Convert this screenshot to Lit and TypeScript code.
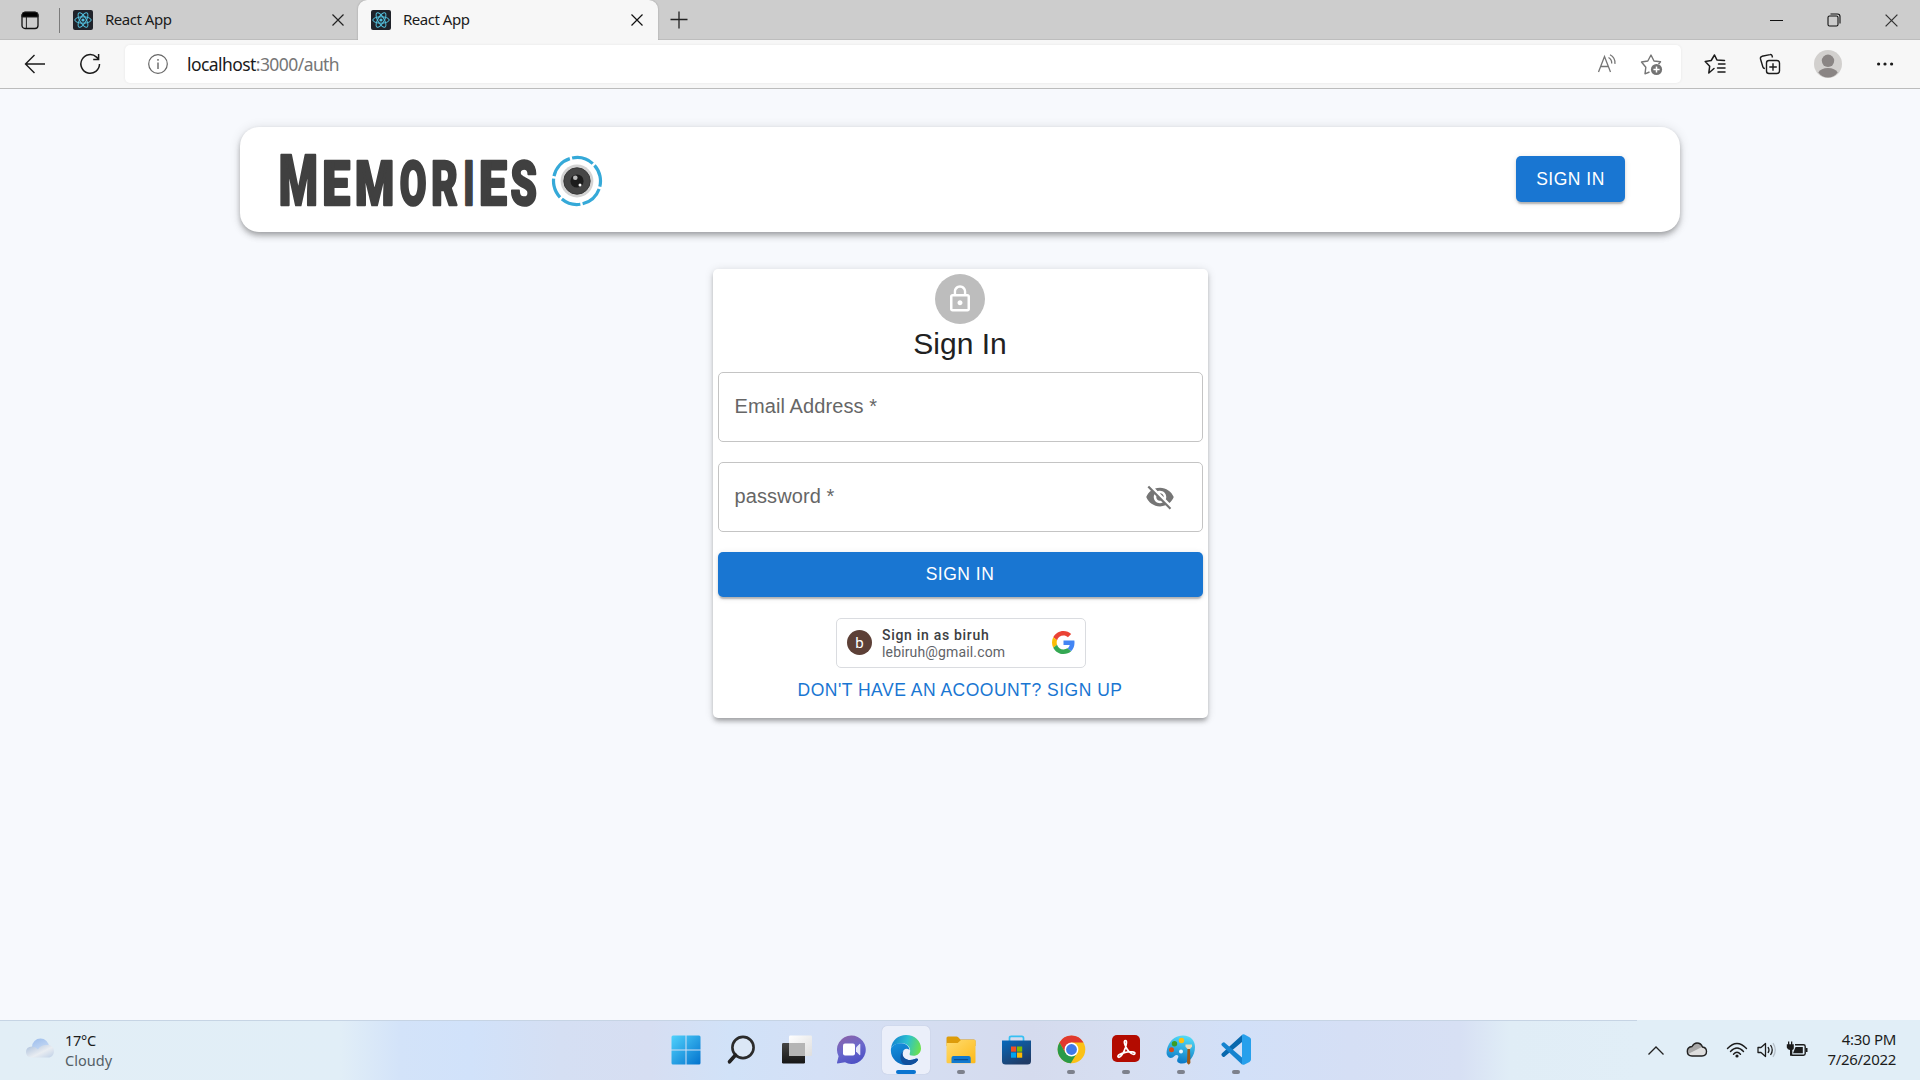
import { LitElement, html, css, svg, type TemplateResult } from "lit";
import { customElement } from "lit/decorators.js";

const reactIcon = () => html`<svg class="ico" width="20" height="20" viewBox="0 0 20 20">
  <rect width="20" height="20" rx="2" fill="#20232a" />
  <g fill="none" stroke="#53c1de" stroke-width="1">
    <ellipse cx="10" cy="10" rx="8.2" ry="3.2" />
    <ellipse cx="10" cy="10" rx="8.2" ry="3.2" transform="rotate(60 10 10)" />
    <ellipse cx="10" cy="10" rx="8.2" ry="3.2" transform="rotate(120 10 10)" />
  </g>
  <circle cx="10" cy="10" r="1.6" fill="#53c1de" />
</svg>`;

const closeIcon = (size: number, color: string) => html`<svg class="ico" width=${size} height=${size} viewBox="0 0 14 14">
  <path d="M1.5 1.5 12.5 12.5M12.5 1.5 1.5 12.5" stroke=${color} stroke-width="1.2" fill="none" />
</svg>`;

/** Browser chrome: tab strip and address bar. */
@customElement("browser-bar")
export class BrowserBar extends LitElement {
  static styles = css`
    :host { display: block; font-family: "Noto Sans", "Open Sans", sans-serif; color: #1b1b1b; }
    .ico { display: block; flex: none; }
    .tabs { display: flex; height: 40px; background: #cdcdcd; box-sizing: border-box; box-shadow: inset 0 -1px 0 #bdbdbd; }
    .lead { width: 59px; display: flex; align-items: center; padding-left: 21px; box-sizing: border-box; }
    .tab { display: flex; align-items: center; box-sizing: border-box; height: 40px; font-size: 15px; letter-spacing: -0.48px; }
    .tab .title { flex: 1; padding-left: 12px; line-height: 38px; height: 40px; }
    .first { width: 299px; padding: 0 13px 0 0; }
    .first::before { content: ""; width: 1px; height: 25px; background: #7b7b7b; margin: 1px 0 0; }
    .first .react { margin-left: 13px; }
    .react { flex: none; }
    .active { width: 300px; padding: 0 14px 0 13px; background: #f7f7f7; border-radius: 9px 9px 0 0; box-shadow: 0 0 2px rgba(0, 0, 0, 0.25); clip-path: inset(0 -3px 0 -3px); }
    .plus { margin: 11px 0 0 12px; }
    .win { margin-left: auto; display: flex; align-items: center; padding-right: 21px; gap: 43px; }
    .tools { height: 49px; background: #f7f7f7; border-bottom: 1px solid #bcbcbc; box-sizing: border-box; display: flex; align-items: center; }
    .back { margin-left: 24px; }
    .reload { margin-left: 33px; }
    .addr { width: 1556px; height: 38px; margin: 0 0 1px 24px; background: #fff; border-radius: 5px; box-shadow: 0 0 3px rgba(0, 0, 0, 0.07); display: flex; align-items: center; padding: 0 17px 0 22px; box-sizing: border-box; }
    .url { flex: 1; padding-left: 18px; font-size: 17.5px; letter-spacing: -0.57px; line-height: 36px; }
    .url span { color: #767676; }
    .star { margin-left: 21px; }
    .fav { margin-left: 23px; }
    .col { margin-left: 33px; }
    .user { margin-left: 33px; }
    .dots { margin-left: 34px; }
  `;

  render() {
    return html`
      <div class="tabs">
        <div class="lead">
          <svg class="ico" width="18" height="19" viewBox="0 0 18 19">
            <rect x="1" y="1.5" width="16" height="16" rx="3" fill="none" stroke="#111" stroke-width="1.3" />
            <path d="M1 6V4a3 3 0 0 1 3-3h10a3 3 0 0 1 3 3v2zM5.4 6v11" fill="#000" stroke="#222" stroke-width="1" />
          </svg>
        </div>
        <div class="tab first">
          <div class="react">${reactIcon()}</div><div class="title">React App</div>${closeIcon(14, "#222")}
        </div>
        <div class="tab active">
          <div class="react">${reactIcon()}</div><div class="title">React App</div>${closeIcon(14, "#111")}
        </div>
        <svg class="ico plus" width="18" height="18" viewBox="0 0 18 18"><path d="M9 .5v17M.5 8.500h17" stroke="#222" stroke-width="1.3" /></svg>
        <div class="win">
          <svg class="ico" width="15" height="14" viewBox="0 0 15 14"><path d="M1 7.500h13" stroke="#111" /></svg>
          <svg class="ico" width="14" height="14" viewBox="0 0 14 14" fill="none" stroke="#111" stroke-width="1.1">
            <rect x="1" y="3" width="10" height="10" rx="1.500" /><path d="M3.500 1h7Q13 1 13 3.500v7" />
          </svg>
          ${closeIcon(15, "#333")}
        </div>
      </div>
      <div class="tools">
        <svg class="ico back" width="22" height="22" viewBox="0 0 22 22" fill="none" stroke="#1b1b1b" stroke-width="1.4"><path d="M21 11H1.600M10.500 2l-9 9 9 9" /></svg>
        <svg class="ico reload" width="22" height="22" viewBox="0 0 22 22" fill="none" stroke="#1b1b1b" stroke-width="1.5">
          <path d="M20.500 11a9.300 9.300 0 1 1-3-6.900L19.500 6M19.600 1v5.400h-5.400" />
        </svg>
        <div class="addr">
          <svg class="ico" width="22" height="22" viewBox="0 0 22 22" fill="none" stroke="#666" stroke-width="1.2">
            <circle cx="11" cy="11" r="9.300" /><path d="M11 9.500v6.500M11 6v1.800" stroke-width="1.400" />
          </svg>
          <div class="url">localhost<span>:3000/auth</span></div>
          <svg class="ico" width="22" height="22" viewBox="0 0 22 22" fill="none" stroke="#757575" stroke-width="1.3">
            <path d="M1.500 19 7.500 3.500 13.500 19M3.800 13.500h7.500M11.500 4.500q3.500 2 3.200 6M13 1.800q5.600 3 4.900 9" />
          </svg>
          <svg class="ico star" width="24" height="24" viewBox="0 0 24 24">
            <path d="M9.500 20 5 21.800l.8-6.500L1.500 10l6.300-1L11 3l3 6 6.500.8-2 2.400" fill="none" stroke="#757575" stroke-width="1.400" stroke-linejoin="round" />
            <circle cx="16.500" cy="17.500" r="5.600" fill="#737373" /><path d="M16.500 14.400v6.200M13.400 17.500h6.200" stroke="#fff" stroke-width="1.500" />
          </svg>
        </div>
        <svg class="ico fav" width="22" height="22" viewBox="0 0 22 22" fill="none" stroke="#1b1b1b" stroke-width="1.500" stroke-linejoin="round" stroke-linecap="round">
          <path d="M10 15.500 4.800 20l.9-6.800L1.200 8.500l6-1L10.500 2l2.400 4.900 7.600.6M14.500 11h6.500M13.500 15h7.500M14 19h7" />
        </svg>
        <svg class="ico col" width="22" height="22" viewBox="0 0 22 22" fill="none" stroke="#1b1b1b" stroke-width="1.400">
          <rect x="7.500" y="7.500" width="13" height="13" rx="2.500" /><path d="M14 10.300v7.500M10.300 14h7.500M13.500 4.500 13 2.600Q12.500 1.200 11 1.600L3 3.300Q1 4 1.500 6l2.400 8q.4 1.500 2 1.500" />
        </svg>
        <svg class="ico user" width="28" height="28" viewBox="0 0 28 28">
          <circle cx="14" cy="14" r="14" fill="#d2d0ce" /><circle cx="14" cy="10.800" r="6.200" fill="#8a8584" />
          <path d="M4.300 22.500Q7 18 14 18t9.700 4.500Q20 27.500 14 27.500T4.300 22.500z" fill="#8a8584" />
        </svg>
        <svg class="ico dots" width="18" height="6" viewBox="0 0 18 6" fill="#1b1b1b"><circle cx="2.600" cy="3" r="1.600" /><circle cx="9" cy="3" r="1.600" /><circle cx="15.600" cy="3" r="1.600" /></svg>
      </div>
    `;
  }
}

// Each wordmark letter: glyph, ink left edge, font size, ink width.
const WORDMARK: [string, number, number, number][] = [
  ["M", 1, 70, 35],
  ["E", 44.8, 61, 24],
  ["M", 77.3, 61, 35],
  ["O", 121, 61, 24],
  ["R", 153.3, 61, 24],
  ["I", 185.6, 61, 6.6],
  ["E", 201.5, 61, 24],
  ["S", 231.5, 61, 24.5],
];

// Ink left bearing and ink width of the heavy Roboto capitals, in em.
const INK: Record<string, [number, number]> = {
  M: [0.052, 0.783],
  E: [0.052, 0.482],
  O: [0.035, 0.62],
  R: [0.052, 0.59],
  I: [0.058, 0.185],
  S: [0.026, 0.58],
};

/** The sign-in page itself. */
@customElement("auth-page")
export class AuthPage extends LitElement {
  static styles = css`
    :host { display: flex; flex-direction: column; align-items: center; background: #f7f9fd; font-family: "Liberation Sans", Arial, sans-serif; }
    .nav { width: 1440px; height: 105px; margin-top: 38px; background: #fff; border-radius: 19px; box-sizing: border-box; padding: 0 55px 0 40px; display: flex; align-items: center; justify-content: space-between;
      box-shadow: 0 2.500px 5px -1px rgba(0, 0, 0, 0.2), 0 5px 6px 0 rgba(0, 0, 0, 0.14), 0 1px 12px 0 rgba(0, 0, 0, 0.12); }
    .brand { display: flex; align-items: center; }
    .brand svg { display: block; }
    .word { font-family: Roboto, sans-serif; font-weight: 900; fill: #404040; stroke: #404040; stroke-width: 2.500px; stroke-linejoin: round; }
    .lens { margin: 3px 0 0 11px; }
    .btn { background: #1976d2; color: #fff; border: 0; border-radius: 5px; font: 500 17.5px/22px "Liberation Sans", Arial, sans-serif; letter-spacing: 0.5px; display: flex; align-items: center; justify-content: center; box-sizing: border-box; padding: 0 0 1px;
      box-shadow: 0 3.500px 1.500px -2px rgba(0, 0, 0, 0.16), 0 2px 2.500px 0 rgba(0, 0, 0, 0.12), 0 1px 6px 0 rgba(0, 0, 0, 0.1); }
    .nav .btn { width: 109px; height: 46px; margin-bottom: 2px; padding: 1px 0 0; }
    .card { width: 495px; height: 449px; margin-top: 37px; background: #fff; border-radius: 5px; box-sizing: border-box; padding: 5px; display: flex; flex-direction: column; align-items: center;
      box-shadow: 0 3.500px 4px -2px rgba(0, 0, 0, 0.2), 0 3.500px 5px 0 rgba(0, 0, 0, 0.14), 0 1px 10px 0 rgba(0, 0, 0, 0.12); }
    .avatar { width: 50px; height: 50px; border-radius: 50%; background: #bdbdbd; display: flex; align-items: center; justify-content: center; }
    h1 { margin: 0; font-size: 30px; font-weight: 400; line-height: 40px; color: #212121; }
    .field { width: 485px; height: 70px; border: 1px solid #c4c4c4; border-radius: 5px; box-sizing: border-box; display: flex; align-items: center; justify-content: space-between; padding: 0 27px 2px 16px; font-size: 20px; letter-spacing: 0.1px; color: #666; margin-top: 20px; }
    .field.email { margin-top: 8px; }
    .field svg { display: block; margin-top: 2px; }
    .card .btn { width: 485px; height: 45px; margin-top: 20px; }
    .google { width: 250px; height: 50px; margin-top: 21px; margin-left: 2px; border: 1px solid #dadce0; border-radius: 5px; box-sizing: border-box; display: flex; align-items: center; padding: 0 10px; font-family: Roboto, sans-serif; }
    .who { width: 25px; height: 25px; border-radius: 50%; background: #5d4037; color: #fff; font-size: 15px; line-height: 26px; text-align: center; margin-bottom: 1px; }
    .lines { flex: 1; padding: 1px 0 0 10px; font-size: 14px; line-height: 17px; color: #5f6368; }
    .lines b { display: block; font-weight: 500; color: #3c4043; letter-spacing: 0.7px; }
    .mail { display: block; letter-spacing: 0.15px; }
    .google svg { margin-bottom: 2px; }
    .link { margin-top: 11px; font-size: 17.5px; line-height: 22px; letter-spacing: 0.5px; color: #1976d2; white-space: nowrap; }
  `;

  render() {
    return html`
      <div class="nav">
        <div class="brand">
          <svg class="word" width="260" height="96" viewBox="0 -20 260 96">
            ${WORDMARK.map(([ch, x, size, width]) => {
              const [bearing, ink] = INK[ch];
              const sx = width / (ink * size);
              return svg`<text font-size=${size} transform="translate(${x - bearing * size * sx} 52.800) scale(${sx} 1)">${ch}</text>`;
            })}
          </svg>
          <svg class="lens" width="52" height="52" viewBox="0 0 52 52">
            <g fill="none" stroke="#35a9d8" stroke-width="3.200">
              <circle cx="26" cy="26" r="23.500" pathLength="360" stroke-dasharray="54 6 56 6 56 6 48 6 50 6 60 6" transform="rotate(-102 26 26)" />
            </g>
            <circle cx="26" cy="26" r="16.400" fill="#d3d3d3" />
            <circle cx="26" cy="26" r="13.200" fill="#464646" stroke="#3a3a3a" stroke-width="1" />
            <circle cx="26" cy="26" r="6.600" fill="#1c1c1c" />
            <circle cx="24.300" cy="22.800" r="2.300" fill="#b9b9b9" /><circle cx="29" cy="30" r="1.500" fill="#fff" />
          </svg>
        </div>
        <button class="btn">SIGN IN</button>
      </div>
      <div class="card">
        <div class="avatar">
          <svg width="30" height="30" viewBox="0 0 24 24" fill="#fff"><path d="M12 17c1.100 0 2-.9 2-2s-.9-2-2-2-2 .9-2 2 .9 2 2 2zm6-9h-1V6c0-2.760-2.240-5-5-5S7 3.240 7 6v2H6c-1.100 0-2 .9-2 2v10c0 1.100.9 2 2 2h12c1.100 0 2-.9 2-2V10c0-1.100-.9-2-2-2zM8.900 6c0-1.710 1.390-3.100 3.100-3.100s3.100 1.390 3.100 3.100v2H8.900V6zM18 20H6V10h12v10z" /></svg>
        </div>
        <h1>Sign In</h1>
        <div class="field email">Email Address *</div>
        <div class="field">password *
          <svg width="30" height="30" viewBox="0 0 24 24" fill="#757575"><path d="M12 7c2.760 0 5 2.240 5 5 0 .65-.13 1.260-.36 1.830l2.920 2.920c1.510-1.260 2.700-2.890 3.430-4.750-1.730-4.390-6-7.500-11-7.500-1.400 0-2.740.25-3.980.7l2.160 2.160C10.740 7.130 11.350 7 12 7zM2 4.270l2.280 2.280.46.46C3.080 8.300 1.780 10.020 1 12c1.730 4.390 6 7.500 11 7.500 1.550 0 3.030-.3 4.380-.84l.42.42L19.730 22 21 20.730 3.270 3 2 4.270zM7.530 9.800l1.550 1.550c-.05.21-.08.43-.08.65 0 1.660 1.340 3 3 3 .22 0 .44-.03.65-.08l1.550 1.550c-.67.33-1.410.53-2.200.53-2.760 0-5-2.240-5-5 0-.79.2-1.530.53-2.200zm4.310-.78 3.150 3.150.02-.16c0-1.660-1.340-3-3-3l-.17.01z" /></svg>
        </div>
        <button class="btn">SIGN IN</button>
        <div class="google">
          <div class="who">b</div>
          <div class="lines"><b>Sign in as biruh</b><span class="mail">lebiruh@gmail.com</span></div>
          <svg width="23" height="23" viewBox="0 0 48 48">
            <path fill="#EA4335" d="M24 9.500c3.540 0 6.710 1.220 9.210 3.600l6.850-6.850C35.900 2.380 30.470 0 24 0 14.620 0 6.510 5.380 2.560 13.220l7.980 6.190C12.430 13.720 17.740 9.500 24 9.500z" />
            <path fill="#4285F4" d="M46.980 24.550c0-1.570-.15-3.090-.38-4.550H24v9.020h12.940c-.58 2.960-2.260 5.480-4.780 7.180l7.730 6c4.510-4.180 7.090-10.360 7.090-17.650z" />
            <path fill="#FBBC05" d="M10.530 28.590c-.48-1.450-.76-2.990-.76-4.590s.27-3.140.76-4.590l-7.980-6.190C.92 16.460 0 20.120 0 24c0 3.880.92 7.540 2.560 10.780l7.970-6.190z" />
            <path fill="#34A853" d="M24 48c6.480 0 11.930-2.130 15.890-5.810l-7.730-6c-2.150 1.450-4.920 2.300-8.160 2.300-6.260 0-11.570-4.220-13.470-9.910l-7.980 6.190C6.510 42.620 14.620 48 24 48z" />
          </svg>
        </div>
        <div class="link">DON'T HAVE AN ACOOUNT? SIGN UP</div>
      </div>
    `;
  }
}

interface TaskApp {
  icon: TemplateResult;
  state?: "open" | "active";
}

const box = (content: TemplateResult) => html`<svg width="32" height="32" viewBox="0 0 32 32">${content}</svg>`;

const APPS: TaskApp[] = [
  { icon: box(svg`
      <defs><linearGradient id="w2" x1="2" y1="2" x2="30" y2="30" gradientUnits="userSpaceOnUse"><stop offset="0" stop-color="#4fd0fb"/><stop offset="1" stop-color="#0474ce"/></linearGradient></defs>
      <path d="M1.500 3q0-1.500 1.500-1.500h12.500V15.500h-14zM16.500 1.500H29q1.500 0 1.500 1.500v12.500h-14zM1.500 16.500h14v14H3q-1.500 0-1.500-1.500zM16.500 16.500h14V29q0 1.500-1.500 1.500H16.500z" fill="url(#w2)"/>`) },
  { icon: box(svg`<circle cx="18" cy="13.500" r="10.600" fill="#dbe7f6" stroke="#2b2b2b" stroke-width="2.600"/><path d="M10.500 21 4.500 27.800" stroke="#222" stroke-width="3.600" stroke-linecap="round"/>`) },
  { icon: box(svg`
      <defs><linearGradient id="tv" x1="0" y1="0" x2="0" y2="1"><stop offset="0" stop-color="#444"/><stop offset="1" stop-color="#161616"/></linearGradient>
      <linearGradient id="tw" x1="0" y1="0" x2="1" y2="1"><stop offset="0" stop-color="#fff"/><stop offset="1" stop-color="#dedede"/></linearGradient></defs>
      <rect x="2" y="9" width="23" height="20.500" rx="1.200" fill="url(#tv)"/><rect x="9" y="1.500" width="23" height="20.500" rx="1.200" fill="url(#tw)"/><path d="M9 9h16v13H10.200Q9 22 9 20.800z" fill="#b5b5b5"/>`) },
  { icon: box(svg`
      <defs><linearGradient id="ch" x1=".2" y1="0" x2=".6" y2="1"><stop offset="0" stop-color="#8b62a8"/><stop offset=".5" stop-color="#6a68cc"/><stop offset="1" stop-color="#4d50c4"/></linearGradient></defs>
      <path d="M16.500 1.500a14.200 14.200 0 1 1-6.500 26.800L2.500 29.600Q1.800 29.600 2 28.800l1.600-6.500A14.200 14.200 0 0 1 16.500 1.500z" fill="url(#ch)"/><rect x="8" y="9.500" width="12" height="12" rx="2" fill="#fff"/><path d="M21 13.500l3.500-3.500q.8-.4.8.4v10.200q0 .8-.8.4L21 17.500z" fill="#e4e6fa"/>`) },
  { state: "active", icon: box(svg`
      <defs><linearGradient id="e1" x1="0" y1=".4" x2="1" y2=".6"><stop offset="0" stop-color="#1685d0"/><stop offset=".5" stop-color="#2bc0d0"/><stop offset="1" stop-color="#6de24b"/></linearGradient>
      <linearGradient id="e2" x1=".2" y1="0" x2=".7" y2="1"><stop offset="0" stop-color="#168fdc"/><stop offset="1" stop-color="#0763b7"/></linearGradient></defs>
      <path d="M1 14.500C2 6 8.500 1 16 1c9 0 15 6.200 15 13.500 0 4.500-3.600 7.300-7.500 7.300-3.300 0-4.300-1-3.800-2.300C21.500 15 18.500 9.600 12 9.300 6.500 9 2.500 11.500 1 14.500z" fill="url(#e1)"/>
      <path d="M1 14.500C3 10.200 7.500 8.800 11.500 9.200c5.500.5 8 4 7.900 6.800-2.400-2.600-6.900-.8-6.900 3.500 0 5.500 6.200 8.200 12.500 5.500 1.500-.7 3.800-.4 2.800 1.200C25 30 20.500 31.500 16 31 7 30.700-.2 23.500 1 14.500z" fill="url(#e2)"/>
      <path d="M12.500 19.500c0 5.500 6.200 8.200 12.500 5.500 2.200-1 3.800 0 2.800 1.400-3 3.800-7.300 4.900-11.500 4.600-6-1.200-8.300-10.500-2.300-14.600q-1.500 1.300-1.500 3.100z" fill="#11509d"/>`) },
  { state: "open", icon: box(svg`
      <defs><linearGradient id="f1" x1="0" y1="0" x2="1" y2="1"><stop offset="0" stop-color="#ffdc70"/><stop offset="1" stop-color="#fdb918"/></linearGradient></defs>
      <path d="M1.500 4q0-1.500 1.500-1.500h8.500q1 0 1.700.8l2.200 2.200H29q1.500 0 1.500 1.500v5h-29z" fill="#dd9c0a"/><path d="M1.500 9h11.200L16 6h13.500q1 0 1 1v21q0 1.300-1.300 1.300H3q-1.500 0-1.500-1.300z" fill="url(#f1)"/>
      <path d="M6.500 29V24q0-2 2-2h15.200q2 0 2 2v5z" fill="#1079cf"/><path d="M9.500 25.700h13" stroke="#0b4f91" stroke-width="1.200" stroke-linecap="round"/>`) },
  { icon: box(svg`
      <defs><linearGradient id="st" x1="0" y1="0" x2=".6" y2="1"><stop offset="0" stop-color="#0669bd"/><stop offset="1" stop-color="#203c67"/></linearGradient></defs>
      <path d="M9.500 8V4q0-1.700 1.700-1.700h10.600q1.700 0 1.700 1.700v4" fill="none" stroke="#36c0f3" stroke-width="1.700"/><path d="M2 6.500h29V27q0 3.500-3.500 3.500h-22Q2 30.500 2 27z" fill="url(#st)"/>
      <path d="M11 12.500h5.200v5.200H11z" fill="#f25022"/><path d="M17 12.500h5.200v5.200H17z" fill="#7fba00"/><path d="M11 18.500h5.200v5.200H11z" fill="#00a4ef"/><path d="M17 18.500h5.200v5.200H17z" fill="#ffb900"/>`) },
  { state: "open", icon: box(svg`
      <circle cx="16.500" cy="15.500" r="13.800" fill="#fbc116"/><path d="M4.500 8.500A13.800 13.800 0 0 1 28.500 8.600H16.500l-6 10.500z" fill="#e0392e"/><path d="M4.500 8.500l6 10.400 11.500.2-6.200 10.200A13.800 13.800 0 0 1 4.500 8.500z" fill="#2a9a48"/>
      <circle cx="16.500" cy="15.500" r="6.900" fill="#fff"/><circle cx="16.500" cy="15.500" r="5.400" fill="#4079e8"/>`) },
  { state: "open", icon: box(svg`
      <rect x="2" y="1" width="28" height="27" rx="5" fill="#b30b00"/><path d="M15.500 6.500c-2.500 0-.5 5 1.500 8.500s6.500 6.500 7.800 4.800c1.200-2-5-2.600-9.500-1.500-4.200 1-8.800 3.300-7 4.800 2.200 1.300 5.700-5 7.200-9.600.8-2.800 1.700-7 0-7z" fill="none" stroke="#fff" stroke-width="1.700"/>`) },
  { state: "open", icon: box(svg`
      <defs><linearGradient id="pa" x1=".6" y1="0" x2=".4" y2="1"><stop offset="0" stop-color="#54dcf6"/><stop offset="1" stop-color="#0875c5"/></linearGradient></defs>
      <path d="M18 1.500c8 0 12 5.500 12 11.500 0 9-6 16.500-13 16.500-4.500 0-6-2.500-4-5.500 1.500-2.300-1.500-4-3.500-2-2.500 2.800-6 2.500-7.500-1C.5 17 4 1.500 18 1.500z" fill="url(#pa)"/>
      <circle cx="16.500" cy="6.500" r="2.700" fill="#ffbe0b"/><circle cx="9.500" cy="9.800" r="2.700" fill="#3b9d24"/><circle cx="6.500" cy="15.800" r="2.500" fill="#d94b1c"/><circle cx="16" cy="17.500" r="2" fill="#e5f5ff"/>
      <path d="M20.500 10.500h6.500v2.200l-2 2.300h-2.500l-2-2.300z" fill="#ead7b3"/><path d="M22.500 15h2.500l.4 14-1.700 1.800L22 29z" fill="#9c5917"/>`) },
  { state: "open", icon: box(svg`
      <path d="M22 8 4.500 22.800Q3.500 23.500 2.500 22.500L1.500 21.200Q1 20.200 2 19.300L22 1z" fill="#0968ad"/><path d="M22 23.500 4.500 8.500Q3.500 7.800 2.600 8.700L1.500 9.800Q1 10.800 2 11.800L22 30.500z" fill="#1583cf"/>
      <path d="M22 .8q1.200-1 2.500-.2l5 2.700q1.500.8 1.500 2.300v20q0 1.500-1.500 2.300l-5 2.700q-1.300.6-2.500-.4z" fill="#27a0ec"/>`) },
];

/** Operating system taskbar. */
@customElement("task-bar")
export class TaskBar extends LitElement {
  static styles = css`
    :host { display: grid; grid-template-columns: 658px 605px 1fr; height: 60px; box-sizing: border-box; padding-top: 1px;
      background: linear-gradient(90deg, #c6d4e4 1637px, transparent 1637px) 0 0 / 100% 1px no-repeat,
        linear-gradient(90deg, #e2eef6 0, #e1eef7 340px, #d3e3f9 400px, #d1e2fa 470px, #d5dff3 560px, #d6def2 650px, #d1e2f8 730px, #d4e0f6 820px, #d5def2 900px, #d5dbee 1030px, #d6def1 1120px, #d2e0f8 1240px, #d5dff5 1350px, #d7e0f4 1460px, #e0edf6 1510px, #e1eef7 1640px);
      font-family: "Noto Sans", "Open Sans", sans-serif; font-size: 14.500px; line-height: 20px; color: #1c1c1c; }
    svg { display: block; }
    .weather { display: flex; align-items: center; padding-left: 25px; }
    .weather svg { margin-bottom: 5px; }
    .temp { padding: 0 0 1px 8px; letter-spacing: -0.300px; }
    .sky { color: #555e66; letter-spacing: 0.050px; }
    .apps { display: flex; }
    .app { width: 55px; display: flex; flex-direction: column; align-items: center; }
    .tile { width: 48px; height: 48px; margin-top: 5px; border-radius: 5px; display: flex; flex-direction: column; align-items: center; padding-top: 8px; box-sizing: border-box; }
    .active .tile { background: #ebeffa; box-shadow: 0 0 1px rgba(90, 100, 140, 0.350); }
    .mark { width: 8px; height: 4px; border-radius: 2px; margin-top: 4px; background: #7d818c; }
    .active .mark { width: 20px; background: #0a74d0; }
    .tray { display: flex; align-items: center; justify-content: flex-end; padding: 0 24px 2px 0; }
    .cloud { margin-left: 21px; }
    .wifi { margin-left: 18px; }
    .sound { margin-left: 9px; }
    .power { margin-left: 9px; }
    .clock { width: 88px; text-align: right; font-size: 15px; letter-spacing: -0.300px; padding-bottom: 1px; white-space: nowrap; }
  `;

  render() {
    return html`
      <div class="weather">
        <svg width="32" height="24" viewBox="0 0 32 24">
          <defs>
            <linearGradient id="c1" x1="0" y1="0" x2=".4" y2="1"><stop offset="0" stop-color="#9dbdec" /><stop offset="1" stop-color="#cfe0f6" /></linearGradient>
            <linearGradient id="c2" x1="0" y1="0" x2="1" y2=".9"><stop offset="0" stop-color="#a9bedb" /><stop offset=".6" stop-color="#e9edf2" /><stop offset="1" stop-color="#c3d3e8" /></linearGradient>
          </defs>
          <circle cx="15.500" cy="11" r="8.500" fill="url(#c1)" />
          <path d="M7 10.500q3.500 0 6 3 2.500-4.500 8-4.500h3a6.500 6.500 0 0 1 .5 12.500H6.500Q1 21.300 1 16t6-5.500z" fill="url(#c2)" />
        </svg>
        <div class="temp">17°C<div class="sky">Cloudy</div></div>
      </div>
      <div class="apps">
        ${APPS.map((a) => html`<div class="app ${a.state === "active" ? "active" : ""}"><div class="tile">${a.icon}${a.state ? html`<div class="mark"></div>` : null}</div></div>`)}
      </div>
      <div class="tray">
        <svg width="18" height="12" viewBox="0 0 18 12"><path d="M1.500 10.500 9 3l7.500 7.500" fill="none" stroke="#222" stroke-width="1.300" /></svg>
        <svg class="cloud" width="22" height="18" viewBox="0 0 22 18">
          <path d="M6 5.500Q8 2 11 2q4 0 5.500 4 4 .5 4 4.500 0 4.500-4.500 4.500H6q-4.700 0-4.700-4.700Q1.300 6 6 5.500z" fill="#a8a8a8" />
          <path d="M2 13l14-7q4.500.5 4.500 4.500 0 4.500-4.500 4.500H6q-3 0-4-2z" fill="#dedede" />
          <path d="M6 5.500Q8 2 11 2q4 0 5.500 4 4 .5 4 4.500 0 4.500-4.500 4.500H6q-4.700 0-4.700-4.700Q1.300 6 6 5.500z" fill="none" stroke="#222" stroke-width="1.400" />
        </svg>
        <svg class="wifi" width="22" height="18" viewBox="0 0 22 18" fill="none" stroke="#1c1c1c" stroke-width="1.400" stroke-linecap="round">
          <path d="M1.500 7.500q9.500-10 19 0M4.500 10.500q6.500-7 13 0M7.500 13.200q3.500-3.800 7 0" /><circle cx="11" cy="15" r="1.600" fill="#1c1c1c" stroke="none" />
        </svg>
        <svg class="sound" width="20" height="18" viewBox="0 0 20 18" fill="none" stroke="#1c1c1c" stroke-width="1.300" stroke-linejoin="round">
          <path d="M1 6.500h3l4.500-4v13L4 11.500H1zM11 6q2 3 0 6M13.500 4q3.500 5 0 10" /><path d="M16 2.200q4.500 6.800 0 13.600" stroke="#b5bfc9" />
        </svg>
        <svg class="power" width="22" height="18" viewBox="0 0 22 18">
          <path d="M9 3.800h8.500q1.700 0 1.700 1.700v7q0 1.700-1.700 1.700H5.500" fill="none" stroke="#1c1c1c" stroke-width="1.400" /><path d="M9.500 6h7.300v6.200H7z" fill="#1c1c1c" /><path d="M20 7h1.500v4H20zM.8 3.200H2V.5h1.300v2.700H5V.5h1.300v2.700h1.500v4q0 1.300-1.500 1.800v5.800H4V9Q1.500 8.500.8 6.500z" fill="#1c1c1c" />
        </svg>
        <div class="clock">4:30 PM<br />7/26/2022</div>
      </div>
    `;
  }
}

@customElement("app-root")
export class AppRoot extends LitElement {
  static styles = css`
    :host { display: flex; flex-direction: column; width: 1920px; height: 1080px; overflow: hidden; background: #f7f9fd; }
    .page { flex: 1; }
  `;

  render() {
    return html`<browser-bar></browser-bar><auth-page class="page"></auth-page><task-bar></task-bar>`;
  }
}
